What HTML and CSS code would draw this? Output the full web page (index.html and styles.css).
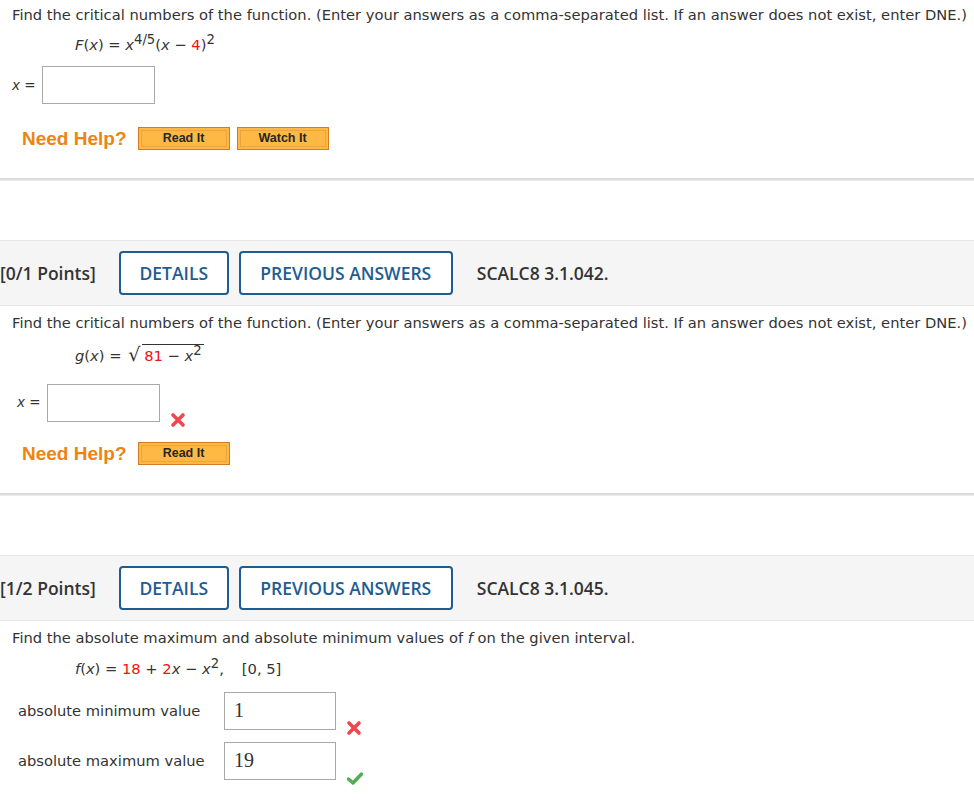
FILE: index.html
```html
<!DOCTYPE html>
<html>
<head>
<meta charset="utf-8">
<link rel="stylesheet" href="styles.css">
</head>
<body>
<div class="qbody first">
  <p class="prompt">Find the critical numbers of the function. (Enter your answers as a comma-separated list. If an answer does not exist, enter DNE.)</p>
  <div class="formula"><i>F</i>(<i>x</i>) = <i>x</i><sup>4/5</sup>(<i>x</i> − <span class="red">4</span>)<sup>2</sup></div>
  <div class="answer">
    <span class="lbl"><i>x</i> =</span>
    <span class="box"></span>
  </div>
  <div class="help">
    <span class="need">Need Help?</span>
    <span class="obtn">Read It</span>
    <span class="obtn">Watch It</span>
  </div>
</div>
<div class="divider"></div>

<div class="qhead">
  <span class="pts">[0/1 Points]</span>
  <span class="bbtn details">DETAILS</span>
  <span class="bbtn prev">PREVIOUS ANSWERS</span>
  <span class="code">SCALC8 3.1.042.</span>
</div>
<div class="qbody">
  <p class="prompt">Find the critical numbers of the function. (Enter your answers as a comma-separated list. If an answer does not exist, enter DNE.)</p>
  <div class="formula f2"><i>g</i>(<i>x</i>) = <span class="rad">√</span><span class="under"><span class="red">81</span> − <i>x</i><sup>2</sup></span></div>
  <div class="answer a2">
    <span class="lbl"><i>x</i> =</span>
    <span class="box"></span>
    <svg class="mark" width="16" height="16" viewBox="0 0 16 16"><path d="M3 3 L13 13 M13 3 L3 13" stroke="#f0474c" stroke-width="3.6" stroke-linecap="round"/></svg>
  </div>
  <div class="help h2">
    <span class="need">Need Help?</span>
    <span class="obtn">Read It</span>
  </div>
</div>
<div class="divider d2"></div>

<div class="qhead">
  <span class="pts">[1/2 Points]</span>
  <span class="bbtn details">DETAILS</span>
  <span class="bbtn prev">PREVIOUS ANSWERS</span>
  <span class="code">SCALC8 3.1.045.</span>
</div>
<div class="qbody last">
  <p class="prompt p3">Find the absolute maximum and absolute minimum values of <i>f</i> on the given interval.</p>
  <div class="formula f3"><i>f</i>(<i>x</i>) = <span class="red">18</span> + <span class="red">2</span><i>x</i> − <i>x</i><sup>2</sup>,<span class="interval">[0, 5]</span></div>
  <div class="vrow">
    <span class="vlbl">absolute minimum value</span>
    <span class="box vbox">1</span>
    <svg class="mark" width="16" height="16" viewBox="0 0 16 16"><path d="M3 3 L13 13 M13 3 L3 13" stroke="#f0474c" stroke-width="3.6" stroke-linecap="round"/></svg>
  </div>
  <div class="vrow">
    <span class="vlbl">absolute maximum value</span>
    <span class="box vbox">19</span>
    <svg class="mark" width="18" height="16" viewBox="0 0 18 16"><path d="M2.5 9 L7 13 L15.5 4" stroke="#4fae4f" stroke-width="3.4" fill="none" stroke-linecap="round" stroke-linejoin="round"/></svg>
  </div>
</div>
</body>
</html>
```

FILE: styles.css
```css
body {
  margin: 0;
  font-family: "DejaVu Sans", Verdana, sans-serif;
  font-size: 14.7px;
  color: #333;
  background: #fff;
}
.qbody {
  padding: 0 0 0 12px;
}
.qbody.last {
  padding-bottom: 30px;
}
.prompt {
  margin: 0;
  padding-top: 6px;
  line-height: 18px;
  white-space: nowrap;
}
.qhead + .qbody .prompt {
  padding-top: 8px;
}
.formula {
  margin: 12px 0 0 63px;
  line-height: 18px;
  white-space: nowrap;
}
.formula sup {
  font-size: 0.9em;
  line-height: 0;
  vertical-align: 0.45em;
}
.red { color: #f01111; }
.answer {
  display: flex;
  align-items: center;
  margin-top: 12px;
}
.lbl {
  width: 30px;
  font-size: 13.5px;
}
.box {
  display: block;
  box-sizing: border-box;
  width: 113px;
  height: 38px;
  border: 1px solid #a9a9a9;
  background: #fff;
}
.help {
  display: flex;
  align-items: center;
  margin-top: 23px;
  padding-left: 10px;
}
.need {
  font-family: "Liberation Sans", Arial, sans-serif;
  font-weight: bold;
  font-size: 19px;
  color: #ec8414;
  margin-right: 11px;
}
.obtn {
  display: block;
  box-sizing: border-box;
  width: 92px;
  height: 23px;
  margin-right: 7px;
  border: 1px solid #d47b24;
  box-shadow: inset 0 0 0 2px #fcb845, inset 0 0 0 3px #f0a23c;
  background: #fdb944;
  font-family: "Liberation Sans", Arial, sans-serif;
  font-weight: bold;
  font-size: 12.5px;
  line-height: 21px;
  text-align: center;
  color: #262626;
}
.divider {
  margin-top: 28px;
  height: 2px;
  background: #dcdcdc;
  border-bottom: 1px solid #ececec;
}
.qhead {
  margin-top: 59px;
  display: flex;
  align-items: center;
  height: 64px;
  background: #f5f5f5;
  border-top: 1px solid #e6e6e6;
  border-bottom: 1px solid #e6e6e6;
  font-family: "Open Sans", sans-serif;
  font-size: 17.5px;
  font-weight: 600;
}
.pts {
  color: #333;
  margin-right: 23px;
}
.bbtn {
  display: block;
  box-sizing: border-box;
  height: 44px;
  line-height: 40px;
  border: 2px solid #1d5d91;
  border-radius: 4px;
  background: #fff;
  color: #1d5d91;
  text-align: center;
}
.details { width: 110px; margin-right: 10px; }
.prev { width: 214px; margin-right: 24px; }
.code {
  color: #333;
}
.f2 { margin-top: 11px; line-height: 22px; }
.rad {
  font-size: 19px;
  margin: 0 2px 0 2px;
}
.under {
  border-top: 1px solid #333;
  padding: 2px 2px 0 2px;
}
.a2 {
  margin-top: 17px;
  padding-left: 5px;
  align-items: flex-start;
}
.a2 .lbl { padding-top: 10px; }
.mark {
  display: block;
  margin-left: 10px;
  margin-top: 28px;
  margin-bottom: -6px;
}
.h2 { margin-top: 20px; }
.d2 { margin-top: 28px; }
.f3 { margin-top: 13px; }
.interval { margin-left: 18px; }
.vrow {
  display: flex;
  align-items: flex-start;
  padding-left: 6px;
  margin-top: 14px;
}
.vrow + .vrow { margin-top: 12px; }
.vlbl {
  width: 206px;
  padding-top: 10px;
}
.vbox {
  width: 112px;
  font-family: "Liberation Serif", "Times New Roman", serif;
  font-size: 20px;
  line-height: 34px;
  padding-left: 9px;
  color: #333;
}
.vrow .mark { margin-left: 10px; margin-top: 28px; }
```
